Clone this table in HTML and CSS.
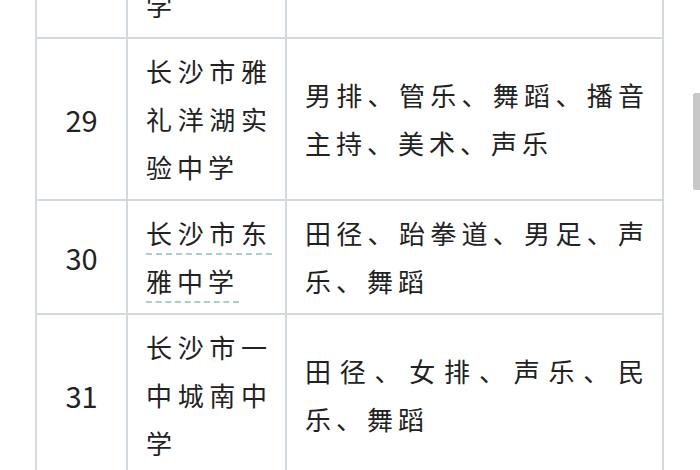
FILE: index.html
```html
<!DOCTYPE html>
<html lang="zh-CN">
<head>
<meta charset="utf-8">
<link rel="stylesheet" href="styles.css">
</head>
<body>
<div class="page">
  <table class="list">
    <tbody>
      <tr>
        <td class="c-no">28</td>
        <td class="c-name">长沙市南雅湘江中学</td>
        <td class="c-item">田径、篮球、声乐、舞蹈</td>
      </tr>
      <tr>
        <td class="c-no">29</td>
        <td class="c-name">长沙市雅礼洋湖实验中学</td>
        <td class="c-item">男排、管乐、舞蹈、播音主持、美术、声乐</td>
      </tr>
      <tr>
        <td class="c-no">30</td>
        <td class="c-name"><span class="link">长沙市东雅中学</span></td>
        <td class="c-item">田径、跆拳道、男足、声乐、舞蹈</td>
      </tr>
      <tr>
        <td class="c-no">31</td>
        <td class="c-name">长沙市一中城南中学</td>
        <td class="c-item">田径、女排、声乐、民乐、舞蹈</td>
      </tr>
    </tbody>
  </table>
  <div class="scroll-thumb"></div>
</div>
</body>
</html>
```

FILE: styles.css
```css
html, body {
  margin: 0;
  padding: 0;
  background: #ffffff;
  overflow: hidden;
  height: 470px;
}

.page {
  position: relative;
  width: 700px;
  height: 470px;
  overflow: hidden;
}

.list {
  margin-top: -125px;
  margin-left: 35px;
  border-collapse: separate;
  border-spacing: 0;
  table-layout: fixed;
  width: 629px;
  border-left: 2px solid #d3dadf;
  border-top: 2px solid #d3dadf;
  font-family: "Noto Sans CJK SC", "Noto Sans", sans-serif;
  color: #222222;
}

.list td {
  box-sizing: border-box;
  border-right: 2px solid #d3dadf;
  border-bottom: 2px solid #d3dadf;
  padding: 8px 0;
  vertical-align: middle;
  font-size: 26px;
  line-height: 48px;
  letter-spacing: 5px;
}

.c-no {
  width: 91px;
  text-align: center;
  font-size: 29px !important;
  letter-spacing: 0 !important;
}

.c-name {
  width: 159px;
  padding-left: 18px !important;
  padding-right: 13px !important;
  text-align: justify;
}

.c-item {
  width: 377px;
  padding-left: 18px !important;
  padding-right: 13px !important;
  text-align: justify;
}

.link {
  text-decoration: underline dashed #a8cfca;
  text-decoration-thickness: 2px;
  text-underline-offset: 9px;
}

.scroll-thumb {
  position: absolute;
  left: 693px;
  top: 93px;
  width: 7px;
  height: 97px;
  background: #c8c8c8;
  border-radius: 2px 0 0 2px;
}
```
